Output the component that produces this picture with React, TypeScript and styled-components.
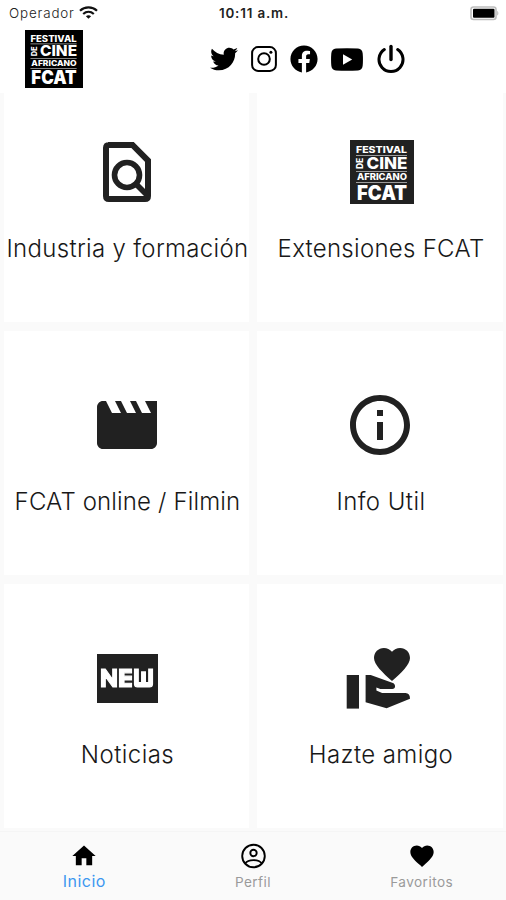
import React from 'react';
import styled, { createGlobalStyle } from 'styled-components';
import { FaTwitter, FaFacebook } from 'react-icons/fa';
import { MdHome, MdFavorite, MdFiberNew, MdInfoOutline } from 'react-icons/md';

const GlobalStyle = createGlobalStyle`
  * { box-sizing: border-box; }
  body { margin: 0; background: #fff; font-family: Inter, Roboto, sans-serif; }
  svg { display: block; flex: none; }
`;

const Screen = styled.div`
  width: 506px;
  height: 900px;
  display: flex;
  flex-direction: column;
  overflow: hidden;
  background: #fafafa;
`;

const StatusBar = styled.div`
  height: 27px;
  flex: none;
  display: grid;
  grid-template-columns: 1fr auto 1fr;
  align-items: center;
  padding: 0 7px 1px 9px;
  background: #fff;
`;

const Carrier = styled.div`
  display: flex;
  align-items: center;
  gap: 4px;
  font-size: 13.4px;
  font-weight: 300;
  letter-spacing: 0.85px;
  color: #222;
`;

const Clock = styled.div`
  font-size: 13.4px;
  font-weight: 600;
  letter-spacing: 0.85px;
  color: #222;
`;

const BatterySlot = styled.div`
  justify-self: end;
`;

const Header = styled.header`
  height: 66px;
  flex: none;
  display: flex;
  padding: 3px 0 0 25px;
  background: #fff;
`;

const Social = styled.nav`
  display: flex;
  align-items: center;
  height: 58px;
  margin-left: 127px;
  color: #000;
`;

const SocialItem = styled.span<{ $before?: number }>`
  margin-left: ${({ $before = 0 }) => $before}px;
`;

const Body = styled.main`
  height: 738px;
  flex: none;
  display: flex;
  flex-direction: column;
  justify-content: flex-end;
  overflow: hidden;
  padding: 0 3px 3px 4px;
`;

const Grid = styled.div`
  display: grid;
  flex: none;
  grid-template-columns: 245px 246px;
  grid-auto-rows: 244px;
  gap: 9px 8px;
`;

const Card = styled.article`
  display: flex;
  flex-direction: column;
  align-items: center;
  padding-top: 58px;
  background: #fff;
`;

const CardIcon = styled.div<{ $shift?: number }>`
  height: 72px;
  display: flex;
  align-items: center;
  justify-content: center;
  margin-left: ${({ $shift = 0 }) => $shift}px;
  color: #212121;
`;

const CardTitle = styled.h2<{ $spacing: number }>`
  margin: 25px -11px 0 -10px;
  padding-left: 1px;
  font-size: 24px;
  line-height: 32px;
  font-weight: 300;
  white-space: nowrap;
  letter-spacing: ${({ $spacing }) => $spacing}px;
  color: #181818;
`;

const NewBadge = styled.div`
  width: 61px;
  height: 49px;
  display: flex;
  align-items: center;
  justify-content: center;
  overflow: hidden;
  border: 3.5px solid #212121;
  border-width: 5px 3px;
  background: #fff;
`;

const TabBar = styled.nav`
  flex: 1;
  display: grid;
  grid-template-columns: repeat(3, 1fr);
  border-top: 1px solid #f5f5f5;
  background: #fafafa;
`;

const Tab = styled.div<{ $active?: boolean }>`
  display: flex;
  flex-direction: column;
  align-items: center;
  padding-top: 10px;
  gap: ${({ $active }) => ($active ? 1 : 2)}px;
  color: #000;

  span {
    font-size: ${({ $active }) => ($active ? 16 : 13.6)}px;
    line-height: 20px;
    letter-spacing: ${({ $active }) => ($active ? 0.5 : 0.45)}px;
    color: ${({ $active }) => ($active ? '#3c97f0' : '#9a9a9a')};
  }
`;

const Wifi = () => (
  <svg width="19" height="14" viewBox="0 0 19 14" fill="none" stroke="#111" strokeWidth="2.2">
    <path d="M1 4.700C5.700 0.300 13.300 0.300 18 4.700" />
    <path d="M4.200 8C7.300 5.200 11.700 5.200 14.800 8" />
    <path d="M9.500 12.700L6.900 10.200C8.400 8.900 10.600 8.900 12.100 10.200Z" fill="#111" stroke="none" />
  </svg>
);

const Battery = () => (
  <svg width="29" height="15" viewBox="0 0 29 15">
    <rect x="1" y="1" width="25" height="12.500" rx="2.500" fill="#fff" stroke="#bdbdbd" strokeWidth="1.600" />
    <path d="M27.200 5v4.600c1.600-.6 1.600-4 0-4.600z" fill="#bdbdbd" />
    <rect x="3" y="2.800" width="21.500" height="9" rx="1" fill="#000" />
  </svg>
);

const FestivalLogo = ({ size, color }: { size: number; color: string }) => (
  <svg width={size} height={size} viewBox="0 0 64 64" fontFamily="Inter, sans-serif" fontWeight="800" fill="#fff">
    <rect width="64" height="64" fill={color} />
    <text x="6" y="13" fontSize="9.500" textLength="51" lengthAdjust="spacingAndGlyphs">FESTIVAL</text>
    <rect x="6" y="15" width="51" height="0.700" opacity="0.800" />
    <text transform="translate(13 29) rotate(-90)" fontSize="8.500" textLength="11" lengthAdjust="spacingAndGlyphs">DE</text>
    <text x="16.500" y="29" fontSize="16" textLength="41" lengthAdjust="spacingAndGlyphs">CINE</text>
    <rect x="6" y="31" width="51" height="0.700" opacity="0.800" />
    <text x="7" y="39.800" fontSize="8.800" textLength="50" lengthAdjust="spacingAndGlyphs">AFRICANO</text>
    <rect x="6" y="42" width="51" height="0.700" opacity="0.800" />
    <text x="7" y="59.500" fontSize="20" fontWeight="900" textLength="50" lengthAdjust="spacingAndGlyphs">FCAT</text>
  </svg>
);

const Instagram = () => (
  <svg width="26" height="26" viewBox="0 0 26 26" fill="none" stroke="#000" strokeWidth="2">
    <rect x="1.100" y="1.100" width="23.800" height="23.800" rx="6" />
    <circle cx="13" cy="13" r="5.800" />
    <circle cx="19.900" cy="6.200" r="1.500" fill="#000" stroke="none" />
  </svg>
);

const Youtube = () => (
  <svg width="32" height="23" viewBox="0 0 32 23">
    <path d="M5 .6Q16-.3 27 .6Q31.400 1 31.700 5.500Q32.200 11.500 31.700 17.500Q31.400 22 27 22.400Q16 23.300 5 22.400Q.6 22 .3 17.500Q-.2 11.500.3 5.500Q.6 1 5 .6Z" />
    <path d="M12 6.300v10.400l9.200-5.200z" fill="#fff" />
  </svg>
);

const Power = () => (
  <svg width="28" height="30" viewBox="0 0 28 30" fill="none" stroke="#000" strokeWidth="3" strokeLinecap="round">
    <path d="M7.300 5.600A12 12 0 1 0 20.700 5.600" />
    <path d="M14 2.500V15.500" strokeWidth="3.400" />
  </svg>
);

const Profile = () => (
  <svg width="28" height="28" viewBox="0 0 28 28" fill="none" stroke="#000" strokeWidth="1.900">
    <circle cx="14.500" cy="14" r="11.300" />
    <circle cx="14.500" cy="11" r="3.200" />
    <path d="M6.500 21.300C9 17 20 17 22.500 21.300" />
  </svg>
);

const FindInPage = () => (
  <svg width="50" height="62" viewBox="0 0 50 62" fill="none" stroke="currentColor">
    <path d="M6 4H30.500L46 19.600V55Q46 58 43 58H7Q4 58 4 55V7Q4 4 7 4Z" strokeWidth="6" />
    <circle cx="25" cy="34" r="12.500" strokeWidth="5.600" />
    <path d="M33.500 42.500L46 55" strokeWidth="5.600" />
  </svg>
);

const Clapper = () => (
  <svg width="72" height="72" viewBox="0 0 24 24" fill="currentColor">
    <path d="M18 4l2 4h-3l-2-4h-2l2 4h-3l-2-4H8l2 4H7L5 4H4c-1.100 0-1.990.9-1.990 2L2 18c0 1.100.9 2 2 2h16c1.100 0 2-.9 2-2V4z" />
  </svg>
);

const GivingHand = () => (
  <svg width="72" height="72" viewBox="0 0 24 24" fill="currentColor">
    <path d="M.9 11h4.100v11.200H.9z" />
    <path d="M16 3.250C16.650 2.490 17.660 2 18.700 2 20.550 2 22 3.450 22 5.300c0 2.270-2.910 4.900-6 7.700-3.090-2.810-6-5.440-6-7.700C10 3.450 11.450 2 13.300 2c1.040 0 2.050.49 2.700 1.250z" />
    <path d="M7.200 11h1.700l7.400 2.700c1 .4 1 2-.2 2h-4l-1.300-.5v1l1.900.8H20.500c1 0 1.500.7 1.500 1.900L14.200 22.100 7.200 20.100z" />
  </svg>
);

const cards = [
  { title: 'Industria y formación', spacing: 0.32, shift: 1, icon: <FindInPage /> },
  { title: 'Extensiones FCAT', spacing: 0.28, shift: 4, icon: <FestivalLogo size={64} color="#212121" /> },
  { title: 'FCAT online / Filmin', spacing: 0.15, icon: <Clapper /> },
  { title: 'Info Util', spacing: 0.45, icon: <MdInfoOutline size={72} /> },
  {
    title: 'Noticias',
    spacing: 0.45,
    shift: 1,
    icon: (
      <NewBadge>
        <MdFiberNew size={72} stroke="#fff" strokeWidth={0.4} />
      </NewBadge>
    ),
  },
  { title: 'Hazte amigo', spacing: 0.4, icon: <GivingHand /> },
];

export default function App() {
  return (
    <Screen>
      <GlobalStyle />
      <StatusBar>
        <Carrier>Operador <Wifi /></Carrier>
        <Clock>10:11 a.m.</Clock>
        <BatterySlot><Battery /></BatterySlot>
      </StatusBar>
      <Header>
        <FestivalLogo size={58} color="#000" />
        <Social>
          <SocialItem><FaTwitter size={28} /></SocialItem>
          <SocialItem $before={13}><Instagram /></SocialItem>
          <SocialItem $before={13}><FaFacebook size={28} /></SocialItem>
          <SocialItem $before={13}><Youtube /></SocialItem>
          <SocialItem $before={14}><Power /></SocialItem>
        </Social>
      </Header>
      <Body>
        <Grid>
          {cards.map(({ title, spacing, shift, icon }) => (
            <Card key={title}>
              <CardIcon $shift={shift}>{icon}</CardIcon>
              <CardTitle $spacing={spacing}>{title}</CardTitle>
            </Card>
          ))}
        </Grid>
      </Body>
      <TabBar>
        <Tab $active><MdHome size={28} /><span>Inicio</span></Tab>
        <Tab><Profile /><span>Perfil</span></Tab>
        <Tab><MdFavorite size={28} /><span>Favoritos</span></Tab>
      </TabBar>
    </Screen>
  );
}
